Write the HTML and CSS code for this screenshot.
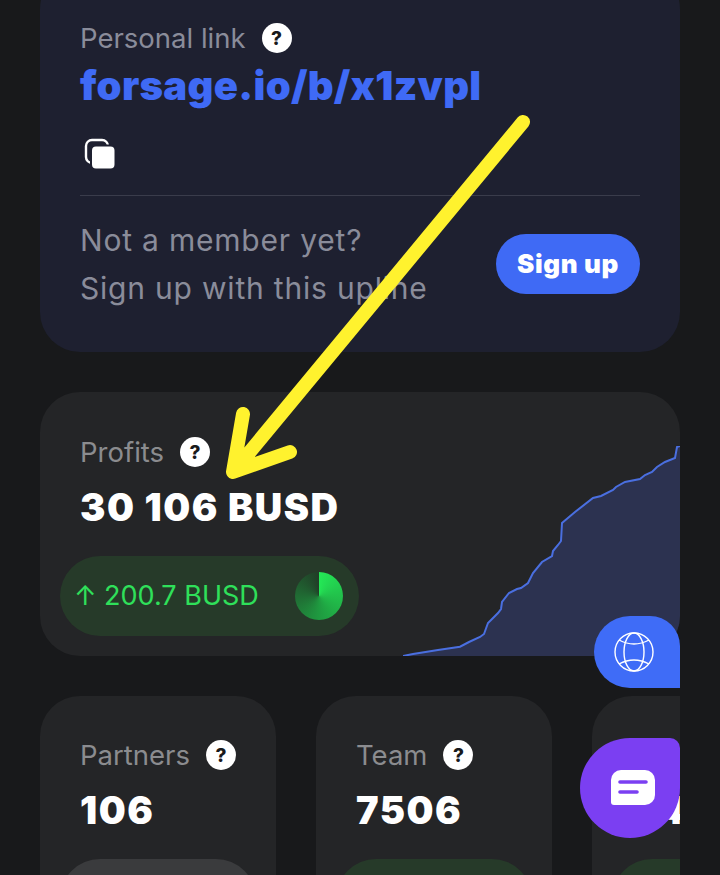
FILE: index.html
```html
<!DOCTYPE html>
<html lang="en">
<head>
    <meta charset="UTF-8">
    <title>Dashboard | Forsage</title>
    <link rel="stylesheet" href="styles.css">
</head>

<body>
    <div class="page">
        <div class="link-card">
            <div class="stat-head">
                <span class="stat-label">Personal link</span>
                <span class="help">?</span>
            </div>
            <div class="link-value">forsage.io/b/x1zvpl</div>
            <svg class="copy-icon" width="32" height="32" viewBox="0 0 32 32">
                <rect x="2" y="2" width="22" height="23" rx="6" fill="none" stroke="#ffffff" stroke-width="2.4"/>
                <rect x="7" y="7.5" width="24.5" height="24" rx="5" fill="#ffffff" stroke="#1e2030" stroke-width="2"/>
            </svg>
            <div class="signup-row">
                <div class="signup-text">Not a member yet?<br>Sign up with this upline</div>
                <button class="signup-btn">Sign up</button>
            </div>
        </div>

        <div class="profit-card">
            <div class="profit-info">
                <div class="stat-head">
                    <span class="stat-label">Profits</span>
                    <span class="help">?</span>
                </div>
                <div class="stat-value">30 106 BUSD</div>
                <div class="pill">
                    <span class="pill-text">↑ 200.7 BUSD</span>
                    <span class="pie"></span>
                </div>
            </div>
            <svg class="chart" width="277" height="210" viewBox="0 0 277 210">
                <path class="chart-area" d="M0 210 L10 208 L35 204 L57 200.7 L66 196 L77 191 L81 188 L85 177 L95 167 L98 163 L99 156 L106 147 L114 143 L118 142 L125 137 L130 127 L139 116 L149 110 L150 105 L155 99 L158 95 L159 77 L172 66 L190 52 L198 50 L210 44 L213 41 L222 36 L237 33 L242 29 L249 26 L254 21 L262 16 L272 12 L274 1 L277 0 L277 210 Z"/>
                <path class="chart-line" d="M0 210 L10 208 L35 204 L57 200.7 L66 196 L77 191 L81 188 L85 177 L95 167 L98 163 L99 156 L106 147 L114 143 L118 142 L125 137 L130 127 L139 116 L149 110 L150 105 L155 99 L158 95 L159 77 L172 66 L190 52 L198 50 L210 44 L213 41 L222 36 L237 33 L242 29 L249 26 L254 21 L262 16 L272 12 L274 1 L277 0"/>
            </svg>
        </div>

        <div class="small-row">
            <div class="small-card">
                <div class="stat-head">
                    <span class="stat-label">Partners</span>
                    <span class="help">?</span>
                </div>
                <div class="stat-value">106</div>
                <div class="pill pill-gray"></div>
            </div>
            <div class="small-card">
                <div class="stat-head">
                    <span class="stat-label">Team</span>
                    <span class="help">?</span>
                </div>
                <div class="stat-value">7506</div>
                <div class="pill"></div>
            </div>
            <div class="small-card">
                <div class="stat-head"></div>
                <div class="stat-value">24</div>
                <div class="pill"></div>
            </div>
        </div>
    </div>

    <button class="globe-btn">
        <svg width="40" height="40" viewBox="0 0 40 40" fill="none" stroke="#ffffff" stroke-width="1.4">
            <circle cx="20" cy="20" r="19"/>
            <ellipse cx="20" cy="20" rx="10" ry="19"/>
            <path d="M5 8 Q20 16 35 8"/>
            <path d="M5 32 Q20 24 35 32"/>
        </svg>
    </button>

    <button class="chat-btn">
        <svg width="44" height="36" viewBox="0 0 44 36">
            <path d="M10 0 H34 A10 10 0 0 1 44 10 V25 A10 10 0 0 1 34 35 H3 A3 3 0 0 1 0 32 V10 A10 10 0 0 1 10 0 Z" fill="#ffffff"/>
            <path d="M9 12 H35 M9 22 H26" stroke="#7b3ff2" stroke-width="3.6" stroke-linecap="round"/>
        </svg>
    </button>

    <!-- hand drawn arrow on top of the screenshot -->
    <svg class="arrow" width="720" height="875" viewBox="0 0 720 875" fill="none">
        <path d="M523 122 L234 471 M243 414 L233 472 L290 452" stroke="#fff22e" stroke-width="14" stroke-linecap="round" stroke-linejoin="round"/>
    </svg>
</body>
</html>
```

FILE: styles.css
```css
html, body {
    background-color: #18191b;
    color: #ffffff;
    font-family: Inter, "Noto Sans", sans-serif;
    margin: 0;
    padding: 0;
    height: 100%;
    overflow: hidden;
}

.page {
    width: 640px;
    margin-left: 40px;
    margin-top: -31px;
    display: flex;
    flex-direction: column;
    gap: 40px;
    overflow: hidden;
}

.stat-head {
    display: flex;
    align-items: center;
    gap: 16px;
    height: 30px;
}

.stat-label {
    font-size: 27.5px;
    color: #8b8c8f;
}

.help {
    width: 30px;
    height: 30px;
    border-radius: 50%;
    background-color: #ffffff;
    color: #18191b;
    font-size: 19px;
    font-weight: 800;
    display: flex;
    align-items: center;
    justify-content: center;
}

.link-card {
    background-color: #1e2030;
    border-radius: 40px;
    padding: 54px 40px 40px;
}

.link-card .stat-label {
    color: #8a8c9a;
}

.link-value {
    color: #3f6af5;
    font-size: 40px;
    font-weight: 900;
    letter-spacing: 0.3px;
    line-height: 44px;
    margin-top: 11px;
}

.copy-icon {
    display: block;
    margin: 30px 0 0 4px;
}

.signup-row {
    display: flex;
    align-items: center;
    justify-content: space-between;
    border-top: 1px solid #3a3c4b;
    margin-top: 25px;
    padding-top: 20px;
}

.signup-text {
    color: #8a8c9a;
    font-size: 30px;
    letter-spacing: 0.8px;
    line-height: 48px;
}

.signup-btn {
    background-color: #3f6af5;
    color: #ffffff;
    border: none;
    border-radius: 30px;
    width: 144px;
    height: 60px;
    font-family: Inter, sans-serif;
    font-size: 26px;
    font-weight: 900;
    letter-spacing: 0.6px;
    padding: 0 0 1px;
}

.profit-card {
    background-color: #242527;
    border-radius: 40px;
    height: 264px;
    display: flex;
    align-items: flex-end;
    justify-content: space-between;
    overflow: hidden;
}

.profit-info {
    padding: 0 0 20px 20px;
}

.profit-info .stat-head,
.profit-info .stat-value {
    margin-left: 20px;
}

.stat-value {
    font-size: 38px;
    font-weight: 900;
    letter-spacing: 1.5px;
    line-height: 44px;
    margin-top: 18px;
}

.pill {
    background-color: #263a29;
    border-radius: 40px;
    width: 299px;
    height: 80px;
    margin-top: 27px;
    display: flex;
    align-items: center;
    justify-content: space-between;
    box-sizing: border-box;
    padding: 0 16px 0 14px;
}

.pill-gray {
    background-color: #3a3b3d;
}

.pill-text {
    color: #2fe05a;
    font-size: 27px;
    margin-top: -2px;
}

.pie {
    width: 48px;
    height: 48px;
    border-radius: 50%;
    background: conic-gradient(#24e856 0deg, #1f9a40 180deg, #213d27 360deg);
}

.chart {
    display: block;
    flex-shrink: 0;
}

.chart-area {
    fill: #2c3250;
}

.chart-line {
    fill: none;
    stroke: #4a6fe0;
    stroke-width: 2;
}

.small-row {
    display: flex;
    gap: 40px;
}

.small-card {
    background-color: #242527;
    border-radius: 40px;
    width: 236px;
    flex-shrink: 0;
    box-sizing: border-box;
    padding: 44px 20px 40px;
}

.small-card .stat-head,
.small-card .stat-value {
    margin-left: 20px;
}

.small-card .pill {
    width: 196px;
}

.globe-btn {
    position: absolute;
    left: 594px;
    top: 616px;
    width: 86px;
    height: 72px;
    background-color: #3f6cf7;
    border: none;
    border-radius: 36px 30px 0 36px;
    padding: 0 6px 0 0;
    display: flex;
    align-items: center;
    justify-content: center;
}

.chat-btn {
    position: absolute;
    left: 580px;
    top: 738px;
    width: 100px;
    height: 100px;
    background-color: #7b3ff2;
    border: none;
    border-radius: 50px 10px 50px 50px;
    padding: 0 0 0 6px;
    display: flex;
    align-items: center;
    justify-content: center;
}

.arrow {
    position: absolute;
    left: 0;
    top: 0;
    pointer-events: none;
}
```
